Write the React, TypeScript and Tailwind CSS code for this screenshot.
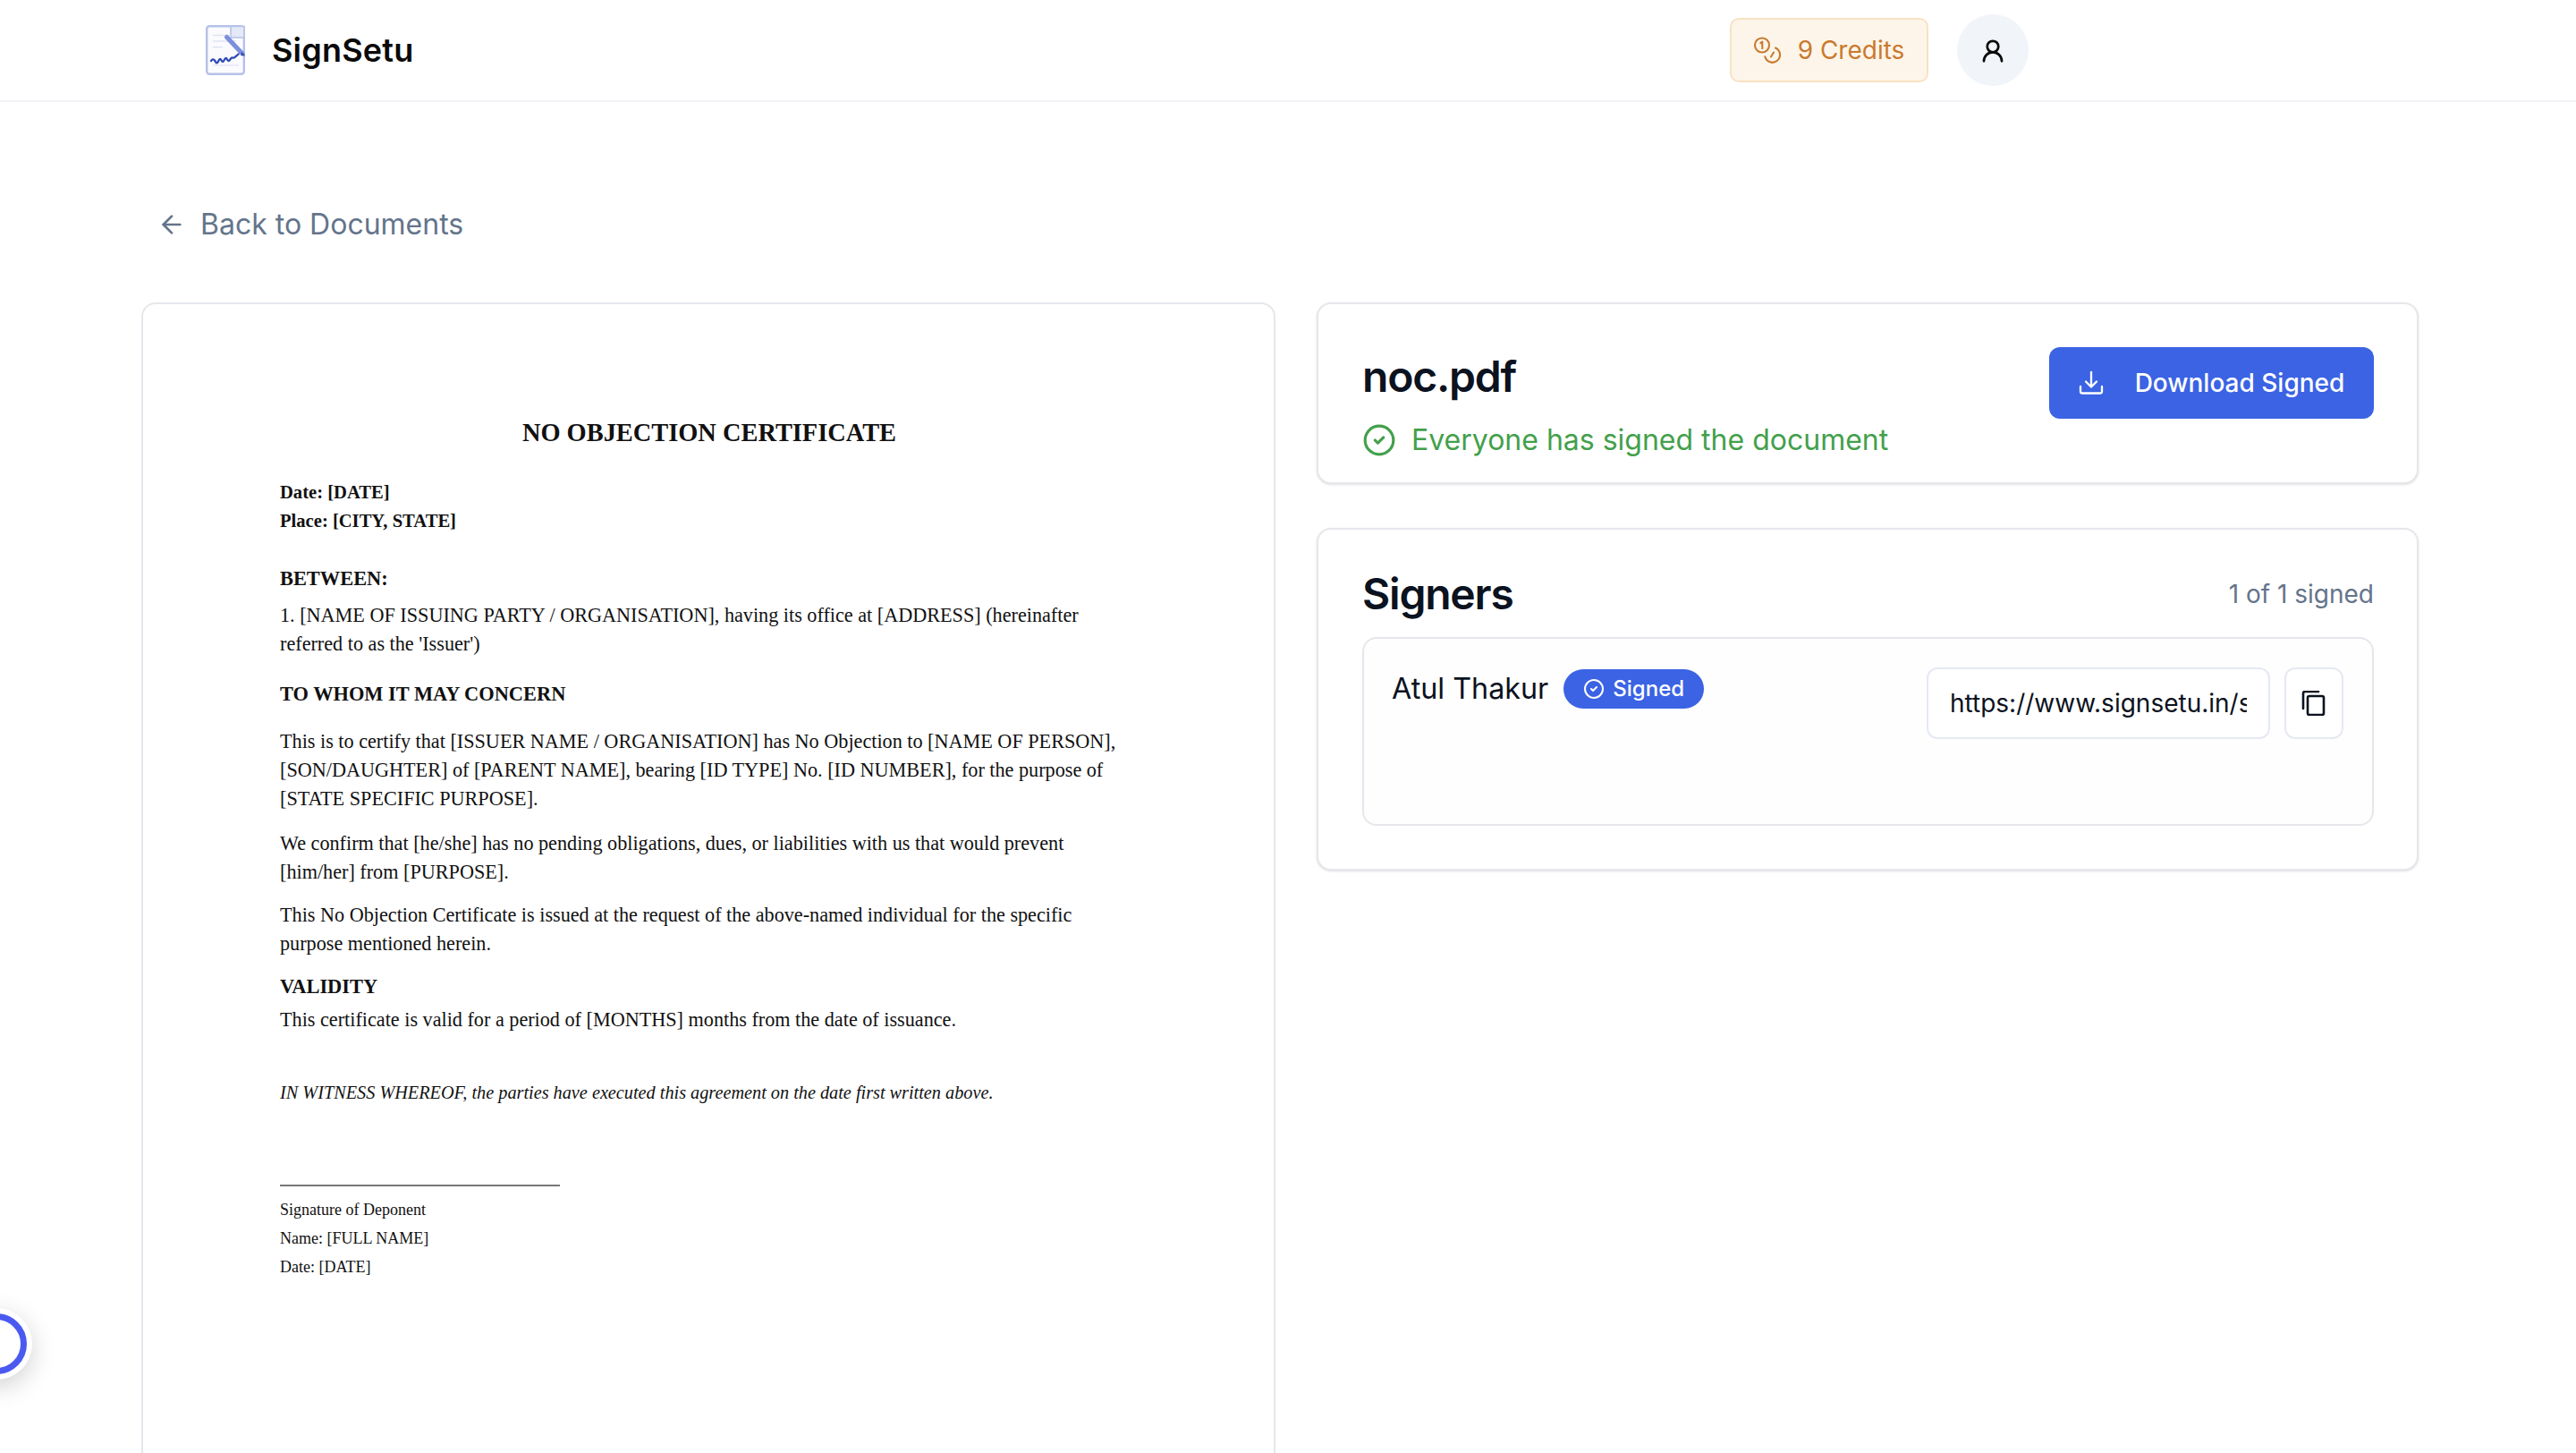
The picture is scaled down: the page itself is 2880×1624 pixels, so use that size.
import React from "react";
import { ArrowLeft, CircleCheck, UserRound } from "lucide-react";

function Logo() {
  return (
    <svg viewBox="0 0 44 56" className="w-[44px] h-[56px]" fill="none">
      <rect x="1.2" y="1.2" width="41.6" height="53.6" rx="3" fill="#fbfbfe" stroke="#b6c1e8" strokeWidth="2.4" />
      <path d="M28 1.5h15v12.5H28z" fill="#e4e8f7" stroke="#b6c1e8" strokeWidth="1.6" />
      <path d="M8 11.5h20M8 18h26M8 24.7h11" stroke="#dfe3f3" strokeWidth="1.4" />
      <path d="M23.5 13.5L41 32" stroke="#7c8fdc" strokeWidth="5" strokeLinecap="round" />
      <path d="M40 30l4.5 4.5-5-1z" fill="#2b45ad" />
      <path
        d="M6 40c1.5-2 3-2 4-.5s1.5 3.5 3 2.5 1.5-4 3-4 1.5 3 3 3 2-4 3.5-4 1.5 3 3 3 2.500-3.500 4-3.500 2 .5 3-.5 2.500-2 4-3.500"
        stroke="#2f49b4"
        strokeWidth="2.3"
        strokeLinecap="round"
        strokeLinejoin="round"
      />
      <path d="M8 45h29" stroke="#dfe3f3" strokeWidth="1.2" />
    </svg>
  );
}

function CoinsIcon() {
  return (
    <svg viewBox="0 0 30 30" className="w-[30px] h-[30px] text-[#c97a2f]" fill="none" stroke="currentColor" strokeWidth="2.1" strokeLinecap="round" strokeLinejoin="round">
      <circle cx="9" cy="9.500" r="8" />
      <path d="M7.300 7.200l2-1.500v7.500" />
      <path d="M24 12.500a8.500 8.500 0 1 1-11.700 9.800" />
      <path d="M22 17.500l-3 5" />
    </svg>
  );
}

function DownloadIcon() {
  return (
    <svg viewBox="0 0 28 28" className="w-[28px] h-[28px]" fill="none" stroke="currentColor" strokeWidth="2.3" strokeLinecap="round" strokeLinejoin="round">
      <path d="M14 2v16M8 12.500l6 6 6-6" />
      <path d="M2 18v5.500a2 2 0 0 0 2 2h20a2 2 0 0 0 2-2V18" />
    </svg>
  );
}

function CopyIcon() {
  return (
    <svg viewBox="0 0 28 28" className="w-[28px] h-[28px]" fill="none" stroke="#0b1220" strokeWidth="2.6" strokeLinejoin="round" strokeLinecap="round">
      <rect x="7" y="6" width="18" height="21" rx="2" />
      <path d="M2 20V3a2 2 0 0 1 2-2h15" />
    </svg>
  );
}

function DocLine({ children, className = "" }: { children: React.ReactNode; className?: string }) {
  return <div className={`whitespace-nowrap h-[32px] leading-[32px] ${className}`}>{children}</div>;
}

function DocumentPreview() {
  return (
    <div className="font-[family-name:'Liberation_Serif',serif] text-[#111] text-[22.2px] pl-[153px] pt-[124px]">
      <div className="w-[960px] text-center font-bold text-[28.4px] leading-[40px] text-[#111]">NO OBJECTION CERTIFICATE</div>
      <div className="mt-[30px] font-bold text-[20.6px]">
        <DocLine>Date: [DATE]</DocLine>
        <DocLine>Place: [CITY, STATE]</DocLine>
      </div>
      <DocLine className="mt-[33px] font-bold text-[22.4px]">BETWEEN:</DocLine>
      <DocLine className="mt-[9px]">1. [NAME OF ISSUING PARTY / ORGANISATION], having its office at [ADDRESS] (hereinafter</DocLine>
      <DocLine>referred to as the 'Issuer')</DocLine>
      <DocLine className="mt-[24px] font-bold text-[22.4px]">TO WHOM IT MAY CONCERN</DocLine>
      <DocLine className="mt-[21px]">This is to certify that [ISSUER NAME / ORGANISATION] has No Objection to [NAME OF PERSON],</DocLine>
      <DocLine>[SON/DAUGHTER] of [PARENT NAME], bearing [ID TYPE] No. [ID NUMBER], for the purpose of</DocLine>
      <DocLine>[STATE SPECIFIC PURPOSE].</DocLine>
      <DocLine className="mt-[18px]">We confirm that [he/she] has no pending obligations, dues, or liabilities with us that would prevent</DocLine>
      <DocLine>[him/her] from [PURPOSE].</DocLine>
      <DocLine className="mt-[16px]">This No Objection Certificate is issued at the request of the above-named individual for the specific</DocLine>
      <DocLine>purpose mentioned herein.</DocLine>
      <DocLine className="mt-[16px] font-bold text-[22.4px]">VALIDITY</DocLine>
      <DocLine className="mt-[5px]">This certificate is valid for a period of [MONTHS] months from the date of issuance.</DocLine>
      <DocLine className="mt-[49px] italic text-[20.25px]">IN WITNESS WHEREOF, the parties have executed this agreement on the date first written above.</DocLine>
      <div className="mt-[87px] w-[313px] h-[2px] bg-[#777]" />
      <div className="mt-[10px] text-[18px]">
        <DocLine>Signature of Deponent</DocLine>
        <DocLine>Name: [FULL NAME]</DocLine>
        <DocLine>Date: [DATE]</DocLine>
      </div>
    </div>
  );
}

export default function App() {
  return (
    <div className="relative h-screen overflow-hidden bg-white font-[family-name:Inter,sans-serif] text-[#0b1220]">
      <header className="h-[114px] border-b-2 border-[#f1f3f8] flex items-center justify-between pl-[230px] pr-[612px]">
        <div className="flex items-center gap-[30px]">
          <Logo />
          <span className="text-[36px] font-semibold tracking-[0.2px] text-[#0a0a0a]">SignSetu</span>
        </div>
        <div className="flex items-center gap-[32px]">
          <div className="h-[72px] w-[222px] rounded-[10px] border-2 border-[#f8e2c4] bg-[#fdf5e9] flex items-center justify-center gap-[19px] text-[#c97a2f] text-[28px]">
            <CoinsIcon />
            <span>9 Credits</span>
          </div>
          <div className="w-[80px] h-[80px] rounded-full bg-[#f1f4f9] flex items-center justify-center">
            <UserRound className="w-[30px] h-[30px] mt-[2px] text-[#0b0b0b]" strokeWidth={2.2} />
          </div>
        </div>
      </header>

      <main className="pl-[158px] pr-[176px]">
        <div className="h-[224px] flex items-center gap-[16px] text-[#64748b] text-[32px] pt-[50px] pl-[18px]">
          <ArrowLeft className="w-[32px] h-[32px]" strokeWidth={2} />
          <span>Back to Documents</span>
        </div>

        <div className="grid grid-cols-[1268px_1232px] gap-[46px] items-start">
          <div className="h-[1400px] rounded-[16px] border-2 border-[#e5e7eb] bg-white">
            <DocumentPreview />
          </div>

          <div className="flex flex-col gap-[49px]">
            <section className="h-[203px] rounded-[16px] border-2 border-[#e5e7eb] bg-white shadow-sm pl-[49px] pr-[48px] flex justify-between">
              <div className="pt-[53px]">
                <h1 className="text-[48px] leading-[56px] font-semibold tracking-tight">noc.pdf</h1>
                <div className="mt-[19px] flex items-center gap-[17px] text-[32px] text-[#43a04b]">
                  <CircleCheck className="w-[38px] h-[38px]" strokeWidth={2} />
                  <span>Everyone has signed the document</span>
                </div>
              </div>
              <div className="pt-[48px]">
                <button className="w-[363px] h-[80px] rounded-[12px] bg-[#3b63e4] text-white flex items-center justify-center gap-[35px] text-[28px] font-medium">
                  <DownloadIcon />
                  <span>Download Signed</span>
                </button>
              </div>
            </section>

            <section className="h-[383px] rounded-[16px] border-2 border-[#e5e7eb] bg-white shadow-sm pl-[49px] pr-[48px] pt-[37px]">
              <div className="flex items-center justify-between h-[70px]">
                <h2 className="text-[48px] font-semibold tracking-tight">Signers</h2>
                <span className="text-[28px] text-[#64748b]">1 of 1 signed</span>
              </div>
              <div className="mt-[13px] h-[211px] rounded-[16px] border-2 border-[#e5e7eb] bg-[#fefefe] pl-[31px] pr-[32px] py-[32px] flex justify-between">
                <div className="flex items-start gap-[17px]">
                  <span className="mt-[1px] text-[32.3px] leading-[46px]">Atul Thakur</span>
                  <span className="mt-[2px] h-[44px] rounded-full bg-[#3b63e4] text-white text-[24px] font-medium flex items-center gap-[9px] px-[22px]">
                    <CircleCheck className="w-[24px] h-[24px]" strokeWidth={2} />
                    Signed
                  </span>
                </div>
                <div className="flex items-start gap-[16px]">
                  <input
                    readOnly
                    value="https://www.signsetu.in/sign/7f3a91c2"
                    className="w-[384px] h-[80px] rounded-[12px] border-2 border-[#e5e9f2] bg-white px-[24px] text-[28px] text-[#0b1220] outline-none"
                  />
                  <div className="w-[66px] h-[80px] rounded-[12px] border-2 border-[#e5e9f2] bg-white flex items-center justify-center">
                    <CopyIcon />
                  </div>
                </div>
              </div>
            </section>
          </div>
        </div>
      </main>

      <div className="absolute left-[-44px] top-[1462px] w-[80px] h-[80px] rounded-full bg-white shadow-[0_8px_28px_rgba(0,0,0,0.18)] flex items-center justify-center">
        <div className="w-[68px] h-[68px] rounded-full border-[7px] border-[#4a5af0]" />
      </div>
    </div>
  );
}
